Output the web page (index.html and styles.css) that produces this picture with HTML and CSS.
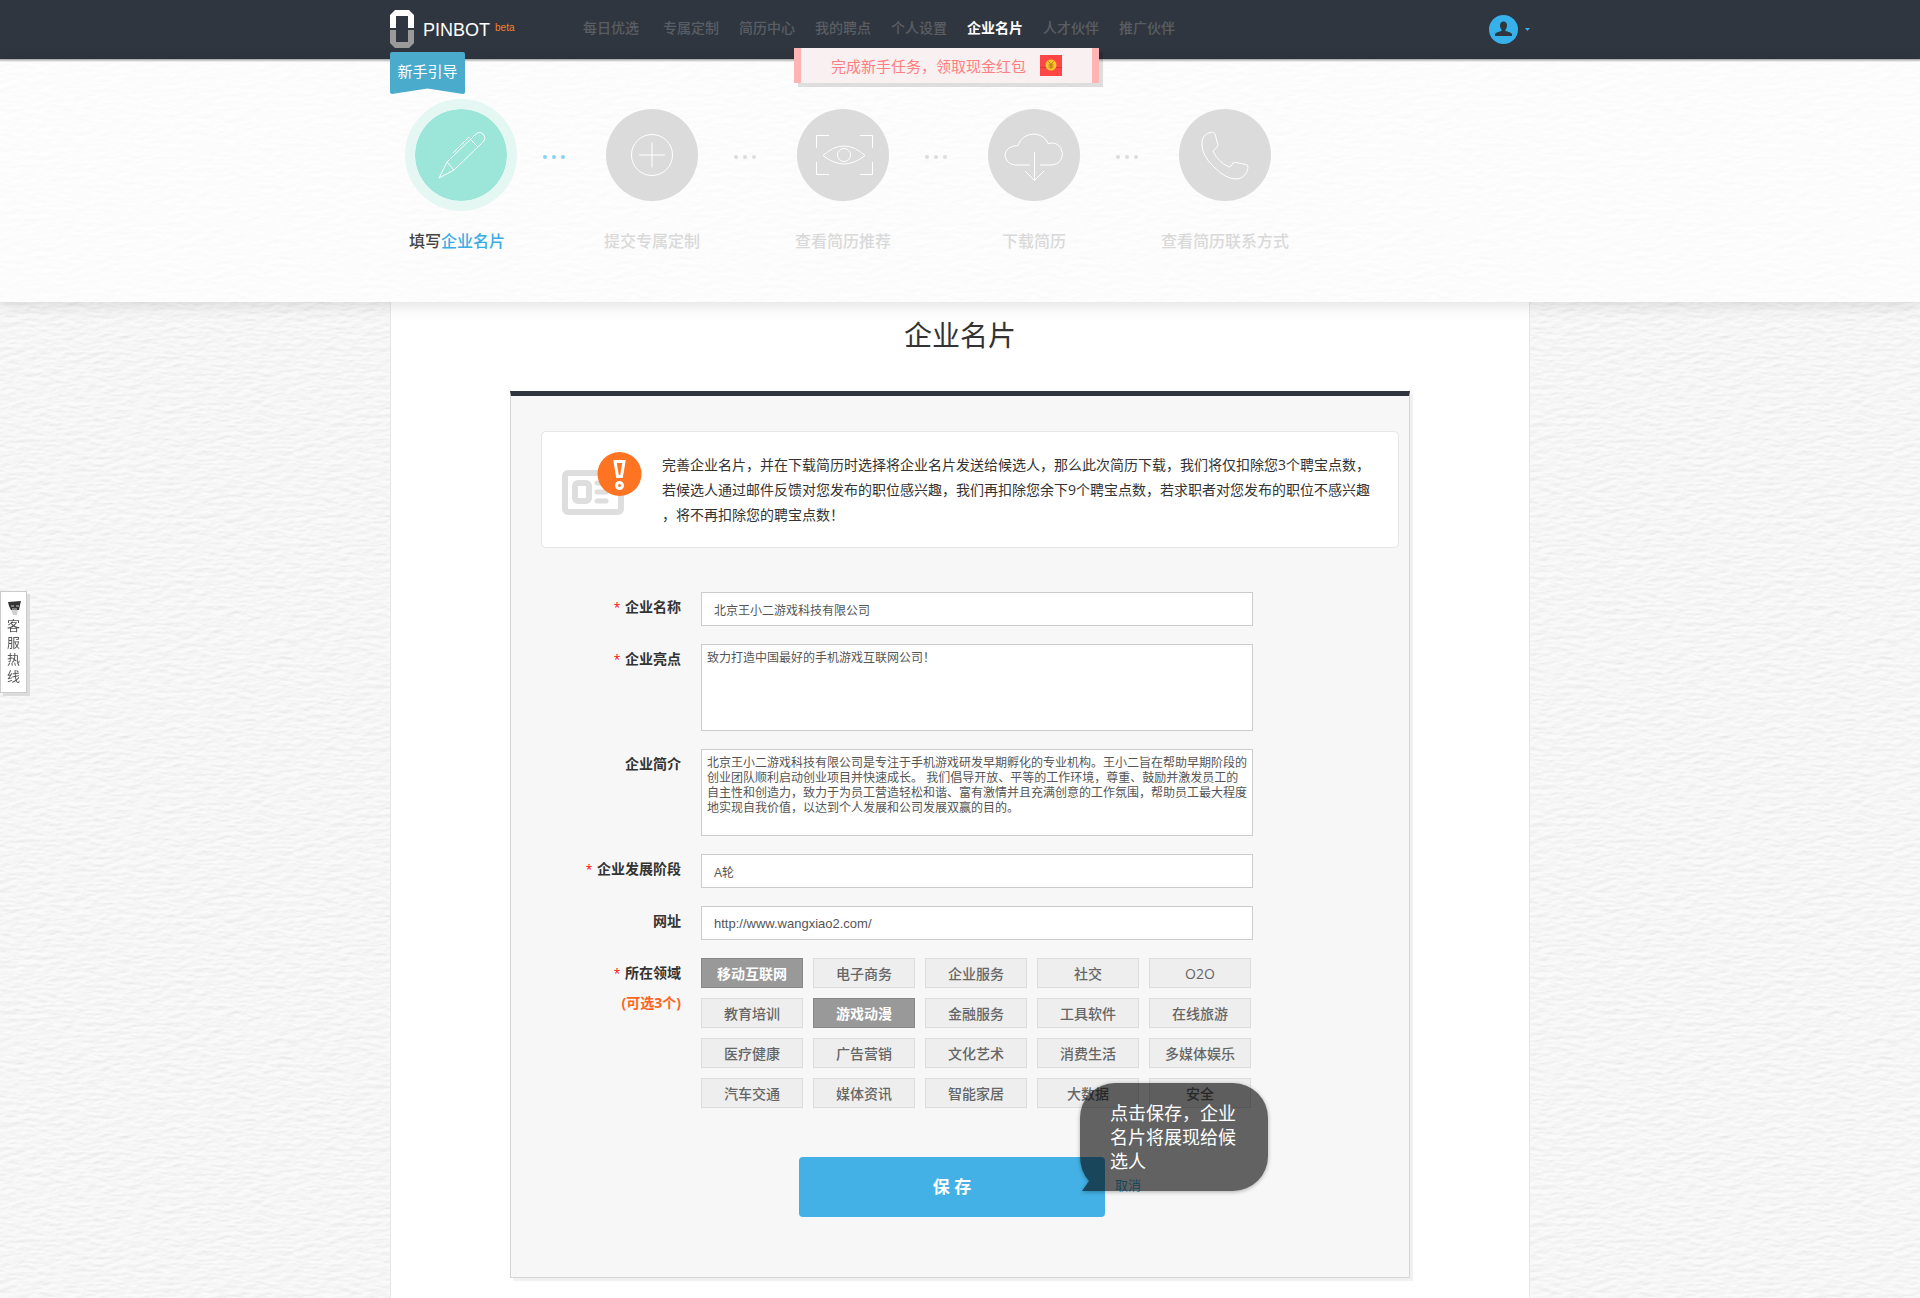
FILE: index.html
```html
<!DOCTYPE html>
<html lang="zh-CN">
<head>
<meta charset="utf-8">
<title>企业名片 - PINBOT</title>
<link rel="stylesheet" href="styles.css">
</head>
<body>
<header class="topbar">
  <div class="container topbar-inner">
    <a class="brand" href="#">
      <svg class="brand-mark" viewBox="0 0 24 38" aria-hidden="true">
        <path fill="#fff" d="M5 0h14l5 5v13h-6V6H6v12H0V5z"/>
        <path fill="#9a9a9a" d="M0 20h6v12h12V20h6v13l-5 5H5l-5-5z"/>
      </svg>
      <span class="brand-name">PINBOT</span>
      <span class="brand-tag">beta</span>
    </a>
    <nav class="nav">
      <a class="nav-first" href="#">每日优选</a>
      <a href="#">专属定制</a>
      <a href="#">简历中心</a>
      <a href="#">我的聘点</a>
      <a href="#">个人设置</a>
      <a class="current" href="#">企业名片</a>
      <a href="#">人才伙伴</a>
      <a href="#">推广伙伴</a>
    </nav>
    <button class="account" type="button" aria-label="账户">
      <svg width="29" height="29" viewBox="0 0 29 29" aria-hidden="true">
        <circle cx="14.500" cy="14.500" r="14.500" fill="#37b1e9"/>
        <path fill="#2f363f" d="M14.500 6.500c2 0 3.500 1.500 3.500 4 0 2-.8 3.300-1.600 4.200v1.200c2.500.7 6.600 1.500 6.600 3.600V21H6v-1.500c0-2.100 4.100-2.900 6.600-3.600v-1.200c-.8-.9-1.600-2.200-1.600-4.200 0-2.500 1.500-4 3.500-4z"/>
      </svg>
      <svg width="5" height="3" viewBox="0 0 5 3" aria-hidden="true"><path fill="#37b1e9" d="M0 0h5L2.500 3z"/></svg>
    </button>
  </div>
</header>

<section class="guide">
  <div class="container guide-inner">
    <div class="ribbon">
      <svg class="ribbon-shape" viewBox="0 0 75 42" preserveAspectRatio="none" aria-hidden="true">
        <path fill="#4aabcd" d="M2 0h71q2 0 2 2v38q0 2-2 2L37.500 36.500 2 42q-2 0-2-2V2q0-2 2-2z"/>
      </svg>
      <span>新手引导</span>
    </div>
    <a class="reward" href="#">
      <span>完成新手任务，领取现金红包</span>
      <svg width="22" height="21" viewBox="0 0 22 21" aria-hidden="true">
        <path fill="#ff4646" d="M0 0h22v21H0z"/>
        <path fill="#d93636" d="M0 12h22v1H0z"/>
        <circle cx="11" cy="10" r="5.500" fill="#fbc52d"/>
        <path d="M8.500 6.500l2.500 3 2.500-3M11 9.500v4.500M8.500 10h5M8.500 12h5" fill="none" stroke="#b3731a"/>
      </svg>
    </a>
    <ol class="steps">
      <li class="step active">
        <div class="disc">
          <svg viewBox="0 0 92 92" aria-hidden="true"><path d="M24 69l8-16 27-26q5-6 9-2 4 4-1 9L39 61zM32 53l7 8M55 30l8 8M38 44l16-16"/></svg>
        </div>
        <p>填写<a href="#">企业名片</a></p>
      </li>
      <li class="dots active" aria-hidden="true"><i></i><i></i><i></i></li>
      <li class="step">
        <div class="disc">
          <svg viewBox="0 0 92 92" aria-hidden="true"><circle cx="46" cy="46" r="20.500"/><path d="M46 33.500v25M33 46h26"/></svg>
        </div>
        <p>提交专属定制</p>
      </li>
      <li class="dots" aria-hidden="true"><i></i><i></i><i></i></li>
      <li class="step">
        <div class="disc">
          <svg viewBox="0 0 92 92" aria-hidden="true"><path d="M19.500 39V26.500H32M63 26.500h12.500V39M75.500 53v12.500H63M32 65.500H19.500V53M26 46.500q21-19 42 0q-21 17-42 0z"/><circle cx="47" cy="46" r="6.500"/></svg>
        </div>
        <p>查看简历推荐</p>
      </li>
      <li class="dots" aria-hidden="true"><i></i><i></i><i></i></li>
      <li class="step">
        <div class="disc">
          <svg viewBox="0 0 92 92" aria-hidden="true"><path d="M42 56H27q-9-1-10-10 1-9 13-9.500 4-11 16-11.500 11 1 14 9.500 12-3 14.500 10Q74 55 64 56H52M46.500 43v28.500M37 62l9.500 9.500L56 62"/></svg>
        </div>
        <p>下载简历</p>
      </li>
      <li class="dots" aria-hidden="true"><i></i><i></i><i></i></li>
      <li class="step">
        <div class="disc">
          <svg viewBox="0 0 92 92" aria-hidden="true"><path d="M23 36q-1-11 10-13 2 0 3 2l3 11q0 2-5 6 5 11 16 16 2 0 4-4 1-1 3-.500l10 2q2 0 2 3-1 9-10 11.500-12 1-25-13Q23 46 23 36z"/></svg>
        </div>
        <p>查看简历联系方式</p>
      </li>
    </ol>
  </div>
</section>

<main class="container page">
  <h1>企业名片</h1>
  <section class="panel">
    <div class="notice">
      <svg class="notice-icon" width="80" height="64" viewBox="0 0 80 64" aria-hidden="true">
        <rect x="3" y="21" width="56" height="39" rx="3" fill="none" stroke="#dedede" stroke-width="6"/>
        <rect x="13" y="31" width="14" height="18" rx="3" fill="none" stroke="#dedede" stroke-width="6"/>
        <path d="M35 31h9M35 40h9M35 49h9" stroke="#dedede" stroke-width="5" stroke-linecap="round"/>
        <circle cx="57.500" cy="22" r="22" fill="#fe7423"/>
        <path d="M53 9.500h9l-2.500 15h-4z" fill="none" stroke="#fff" stroke-width="3"/>
        <circle cx="57.500" cy="33.500" r="3" fill="none" stroke="#fff" stroke-width="3"/>
      </svg>
      <p>完善企业名片，并在下载简历时选择将企业名片发送给候选人，那么此次简历下载，我们将仅扣除您3个聘宝点数，<br>若候选人通过邮件反馈对您发布的职位感兴趣，我们再扣除您余下9个聘宝点数，若求职者对您发布的职位不感兴趣<br>，将不再扣除您的聘宝点数！</p>
    </div>
    <form class="form">
      <div class="row">
        <label for="name"><em>*</em> 企业名称</label>
        <input id="name" type="text" value="北京王小二游戏科技有限公司">
      </div>
      <div class="row">
        <label for="highlight"><em>*</em> 企业亮点</label>
        <textarea id="highlight">致力打造中国最好的手机游戏互联网公司！</textarea>
      </div>
      <div class="row">
        <label for="intro">企业简介</label>
        <textarea id="intro">北京王小二游戏科技有限公司是专注于手机游戏研发早期孵化的专业机构。王小二旨在帮助早期阶段的创业团队顺利启动创业项目并快速成长。 我们倡导开放、平等的工作环境，尊重、鼓励并激发员工的自主性和创造力，致力于为员工营造轻松和谐、富有激情并且充满创意的工作氛围，帮助员工最大程度地实现自我价值，以达到个人发展和公司发展双赢的目的。</textarea>
      </div>
      <div class="row">
        <label for="stage"><em>*</em> 企业发展阶段</label>
        <input id="stage" type="text" value="A轮">
      </div>
      <div class="row">
        <label for="site">网址</label>
        <input id="site" type="url" value="http://www.wangxiao2.com/">
      </div>
      <div class="row">
        <div class="label" id="field-label"><em>*</em> 所在领域<small>(可选3个)</small></div>
        <div class="tags" role="group" aria-labelledby="field-label">
          <button type="button" class="on" aria-pressed="true">移动互联网</button>
          <button type="button">电子商务</button>
          <button type="button">企业服务</button>
          <button type="button">社交</button>
          <button type="button">O2O</button>
          <button type="button">教育培训</button>
          <button type="button" class="on" aria-pressed="true">游戏动漫</button>
          <button type="button">金融服务</button>
          <button type="button">工具软件</button>
          <button type="button">在线旅游</button>
          <button type="button">医疗健康</button>
          <button type="button">广告营销</button>
          <button type="button">文化艺术</button>
          <button type="button">消费生活</button>
          <button type="button">多媒体娱乐</button>
          <button type="button">汽车交通</button>
          <button type="button">媒体资讯</button>
          <button type="button">智能家居</button>
          <button type="button">大数据</button>
          <button type="button">安全</button>
        </div>
      </div>
      <div class="actions">
        <button class="save" type="submit">保 存</button>
        <a class="cancel" href="#">取消</a>
        <div class="tip" role="tooltip">
          <svg viewBox="0 0 188 108" aria-hidden="true"><path d="M35 0h118a35 35 0 0 1 35 35v38a35 35 0 0 1-35 35H2l7-10Q0 88 0 73V35A35 35 0 0 1 35 0z"/></svg>
          <p>点击保存，企业名片将展现给候选人</p>
        </div>
      </div>
    </form>
  </section>
</main>

<a class="hotline" href="#">
  <svg width="13" height="16" viewBox="0 0 13 16" aria-hidden="true">
    <path fill="#d0d0d0" d="M3 9h7l-1 6H5z"/>
    <path fill="#333" d="M0 2l13-1-1 4-1 5H3L1 6z"/>
    <path stroke="#ccc" d="M3 6h3M8 6h3M4 9h5"/>
  </svg>
  <span>客服热线</span>
</a>
</body>
</html>
```
FILE: styles.css
```css
* { box-sizing: border-box; }

body {
  margin: 0;
  min-height: 100vh;
  display: flex;
  flex-direction: column;
  color: #333;
  font: 14px/20px "Open Sans", "Noto Sans CJK SC", sans-serif;
  background-color: #f5f5f5;
  background-image: url("data:image/svg+xml,%3Csvg xmlns='http://www.w3.org/2000/svg' width='400' height='400'%3E%3Cfilter id='p' x='0' y='0' width='100%25' height='100%25' color-interpolation-filters='sRGB'%3E%3CfeTurbulence type='fractalNoise' baseFrequency='.08 .24' numOctaves='3' seed='4' stitchTiles='stitch'/%3E%3CfeDiffuseLighting lighting-color='%23fff' surfaceScale='.4' diffuseConstant='1.11'%3E%3CfeDistantLight azimuth='250' elevation='60'/%3E%3C/feDiffuseLighting%3E%3C/filter%3E%3Crect width='400' height='400' filter='url(%23p)' opacity='.45'/%3E%3C/svg%3E");
}

a { color: inherit; text-decoration: none; }
button, input, textarea { font: inherit; margin: 0; }
p, h1, ol { margin: 0; padding: 0; }

.container { width: 100%; max-width: 1140px; margin: 0 auto; }

.topbar {
  position: relative;
  z-index: 2;
  background: #30363f;
  box-shadow: 0 1px 3px rgba(0, 0, 0, .4);
}
.topbar-inner { display: flex; align-items: center; height: 59px; }
.brand { display: flex; align-items: center; width: 193px; padding-bottom: 2px; color: #fff; }
.brand-mark { width: 24px; height: 38px; }
.brand-name { margin-left: 9px; padding-top: 2px; font-family: "Liberation Sans", sans-serif; font-size: 18px; }
.brand-tag { margin-left: 5px; padding-bottom: 2px; color: #f5822a; font: 10px/16px "Liberation Sans", sans-serif; }
.nav { display: flex; gap: 20px; padding-bottom: 4px; color: #5a5e64; font-weight: 500; }
.nav-first { padding-right: 4px; }
.nav .current { color: #fff; font-weight: bold; }
.account {
  display: flex;
  align-items: center;
  gap: 7px;
  margin-left: auto;
  padding: 0;
  border: 0;
  background: none;
}

.guide {
  position: relative;
  z-index: 3;
  background: rgba(255, 255, 255, .7);
  box-shadow: 0 2px 16px rgba(0, 0, 0, .14);
  clip-path: inset(-12px 0 -20px);
}
/* the header's shadow falls on the top edge of the guide */
.guide::before {
  content: "";
  position: absolute;
  top: 0;
  left: 0;
  right: 0;
  height: 3px;
  background: linear-gradient(rgba(0, 0, 0, .3), transparent);
}
.guide-inner { position: relative; padding: 40px 0 49px; }
.ribbon {
  position: absolute;
  top: -7px;
  left: 0;
  width: 75px;
  height: 42px;
  color: #fff;
  font-size: 15px;
  line-height: 38px;
  text-align: center;
}
.ribbon-shape { position: absolute; inset: 0; width: 100%; height: 100%; }
.ribbon span { position: relative; }
.reward {
  position: absolute;
  top: -11px;
  left: 404px;
  display: flex;
  align-items: center;
  justify-content: center;
  gap: 14px;
  width: 305px;
  height: 35px;
  border: solid #ffb3b3;
  border-width: 0 7px;
  background: #f9f1f1;
  box-shadow: 4px 4px 0 rgba(0, 0, 0, .12);
  color: #ff7f7f;
  font-size: 15px;
}
.steps { display: flex; list-style: none; padding-left: 5px; }
.step { width: 132px; text-align: center; font-size: 16px; font-weight: 500; line-height: 24px; color: #d9d9d9; white-space: nowrap; }
.disc {
  width: 112px;
  height: 112px;
  margin: 0 auto 18px;
  border: 10px solid transparent;
  border-radius: 50%;
  background: #dbdbdb padding-box;
}
.disc svg { display: block; fill: none; stroke: #fff; stroke-width: 1; }
.step.active { color: #444; }
.step.active p { padding-right: 8px; }
.step.active a { color: #39ace4; }
.step.active .disc { border-color: #e5f7f3; background-color: #9ce6d9; }
.dots { display: flex; justify-content: center; gap: 5px; width: 59px; padding: 56px 6px 0 0; }
.dots i { width: 4px; height: 4px; border-radius: 50%; background: #dcdcdc; }
.dots.active i { background: #86d3f3; }

.page {
  flex: 1;
  padding: 16px 119px 20px;
  border: solid #e6e6e6;
  border-width: 0 1px;
  background: #fff;
}
h1 { font-size: 28px; font-weight: normal; line-height: 34px; text-align: center; }
.panel {
  margin-top: 39px;
  padding: 35px 10px 60px 30px;
  border: 1px solid #d5d5d5;
  border-top: 5px solid #30343f;
  background: #f7f7f7;
  box-shadow: 3px 3px 0 #f1f1f1;
}
.notice {
  display: flex;
  gap: 20px;
  padding: 20px;
  border: 1px solid #e6e6e6;
  border-radius: 5px;
  background: #fff;
  white-space: nowrap;
}
.notice-icon { flex: none; }
.notice p { line-height: 25px; }

.form { display: flex; flex-direction: column; gap: 18px; margin-top: 44px; }
.row { display: flex; gap: 20px; }
.row label, .label { width: 140px; padding-top: 5px; font-weight: bold; text-align: right; }
.row em { margin-right: 1px; color: #f00; font-size: 12px; font-style: normal; font-weight: normal; }
.label small { display: block; margin-top: 9px; color: #ff6420; font-size: 14px; }
.row input, .row textarea {
  width: 552px;
  border: 1px solid #ccc;
  border-radius: 0;
  background: #fff;
  color: #555;
  font: 12px/15px "Liberation Sans", "Noto Sans CJK SC", sans-serif;
}
.row input { height: 34px; padding: 0 12px; }
.row input[type="url"] { font-size: 13px; }
.row textarea { display: block; height: 87px; padding: 6px 5px; resize: none; overflow: hidden; }
.tags { display: grid; grid-template-columns: repeat(5, 102px); gap: 10px; }
.tags button {
  height: 30px;
  padding: 1px 0 0;
  border: 1px solid #dcdcdc;
  background: #eee;
  color: #666;
  font-weight: 500;
}
.tags .on { border-color: #888; background: #999; color: #fff; font-weight: bold; }

.actions { position: relative; display: flex; align-items: center; gap: 10px; margin: 31px 0 0 258px; }
.save {
  width: 306px;
  height: 60px;
  border: 0;
  border-radius: 4px;
  background: #43b1e5;
  color: #fff;
  font-size: 17px;
  font-weight: bold;
}
.cancel { padding-bottom: 4px; color: #43b1e5; font-size: 13px; }
.tip {
  position: absolute;
  left: 281px;
  bottom: 26px;
  width: 188px;
  height: 108px;
  padding: 18px 30px;
  color: #fff;
  font-size: 18px;
  line-height: 24px;
}
.tip svg { position: absolute; inset: 0; overflow: visible; opacity: .6; filter: drop-shadow(0 1px 2px rgba(0, 0, 0, .5)); }
.tip p { position: relative; }

.hotline {
  position: fixed;
  z-index: 4;
  top: 591px;
  left: 0;
  display: flex;
  flex-direction: column;
  align-items: center;
  gap: 1px;
  width: 27px;
  padding: 8px 5px 7px 6px;
  border: 1px solid #ccc;
  background: #fff;
  box-shadow: 3px 3px 0 #dcdcdc;
  color: #555;
  font-size: 13px;
  line-height: 17px;
}
```
